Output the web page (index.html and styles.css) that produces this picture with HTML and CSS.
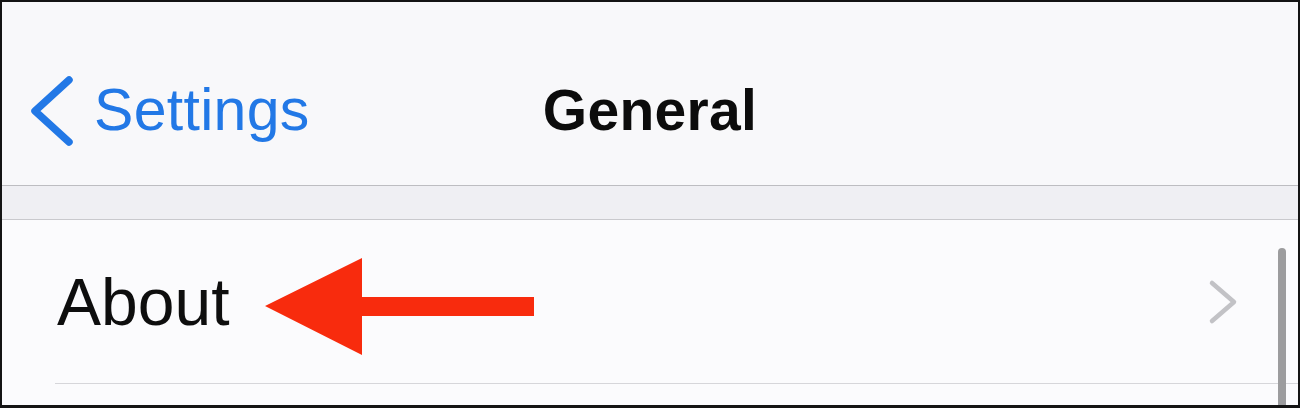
FILE: index.html
```html
<!DOCTYPE html>
<html>
<head>
<meta charset="utf-8">
<link rel="stylesheet" href="styles.css">
</head>
<body>
<div class="screen">
  <header class="nav">
    <a class="back">
      <svg class="back-icon" width="42" height="70" viewBox="0 0 42 70"><polyline points="38,4 4,35 38,66" fill="none" stroke="#2278e6" stroke-width="7.5" stroke-linecap="round" stroke-linejoin="round"/></svg>
      <span class="back-label">Settings</span>
    </a>
    <h1 class="title">General</h1>
    <div class="spacer"></div>
  </header>
  <div class="band"></div>
  <div class="list">
    <div class="row">
      <span class="row-label">About</span>
      <svg class="chevron" width="32" height="46" viewBox="0 0 32 46"><polyline points="5,4 27,23 5,42" fill="none" stroke="#c2c2c6" stroke-width="4.5" stroke-linecap="round" stroke-linejoin="round"/></svg>
    </div>
  </div>
  <svg class="arrow" width="280" height="100" viewBox="0 0 280 100"><polygon points="1,48 98,0 98,39 270,39 270,58 98,58 98,97" fill="#f82b0d"/></svg>
  <div class="scrollbar"></div>
</div>
</body>
</html>
```
FILE: styles.css
```css
html, body {
  margin: 0;
  padding: 0;
  background: #fff;
}
.screen {
  width: 1300px;
  height: 408px;
  box-sizing: border-box;
  border: 2px solid #141414;
  border-bottom-width: 3px;
  background: #fbfbfd;
  position: relative;
  overflow: hidden;
  font-family: "Liberation Sans", Arial, sans-serif;
}
.nav {
  height: 184px;
  box-sizing: border-box;
  padding-top: 34px;
  background: #f8f8fa;
  border-bottom: 1px solid #bdbdc1;
  display: grid;
  grid-template-columns: 1fr auto 1fr;
  align-items: center;
}
.back {
  display: flex;
  align-items: center;
  gap: 21px;
  padding-left: 29px;
  color: #2278e6;
}
.back-icon {
  display: block;
}
.back-label {
  font-size: 59px;
  line-height: 1;
  letter-spacing: 0.3px;
}
.title {
  margin: 0;
  font-size: 57px;
  line-height: 1;
  font-weight: 700;
  color: #0c0c0c;
  letter-spacing: 0.3px;
}
.band {
  height: 33px;
  background: #efeff3;
  border-bottom: 1px solid #c9c9cd;
}
.list {
  background: #fbfbfd;
  padding-left: 53px;
}
.row {
  height: 163px;
  display: flex;
  align-items: center;
  justify-content: space-between;
  padding-right: 59px;
  border-bottom: 1px solid #d6d6da;
}
.row-label {
  font-size: 66px;
  line-height: 1;
  color: #0e0e0e;
  padding-left: 2px;
}
.chevron {
  display: block;
}
.arrow {
  position: absolute;
  left: 262px;
  top: 256px;
}
.scrollbar {
  position: absolute;
  left: 1276px;
  top: 246px;
  width: 8px;
  height: 170px;
  border-radius: 4px;
  background: #9c9c9e;
}
```
